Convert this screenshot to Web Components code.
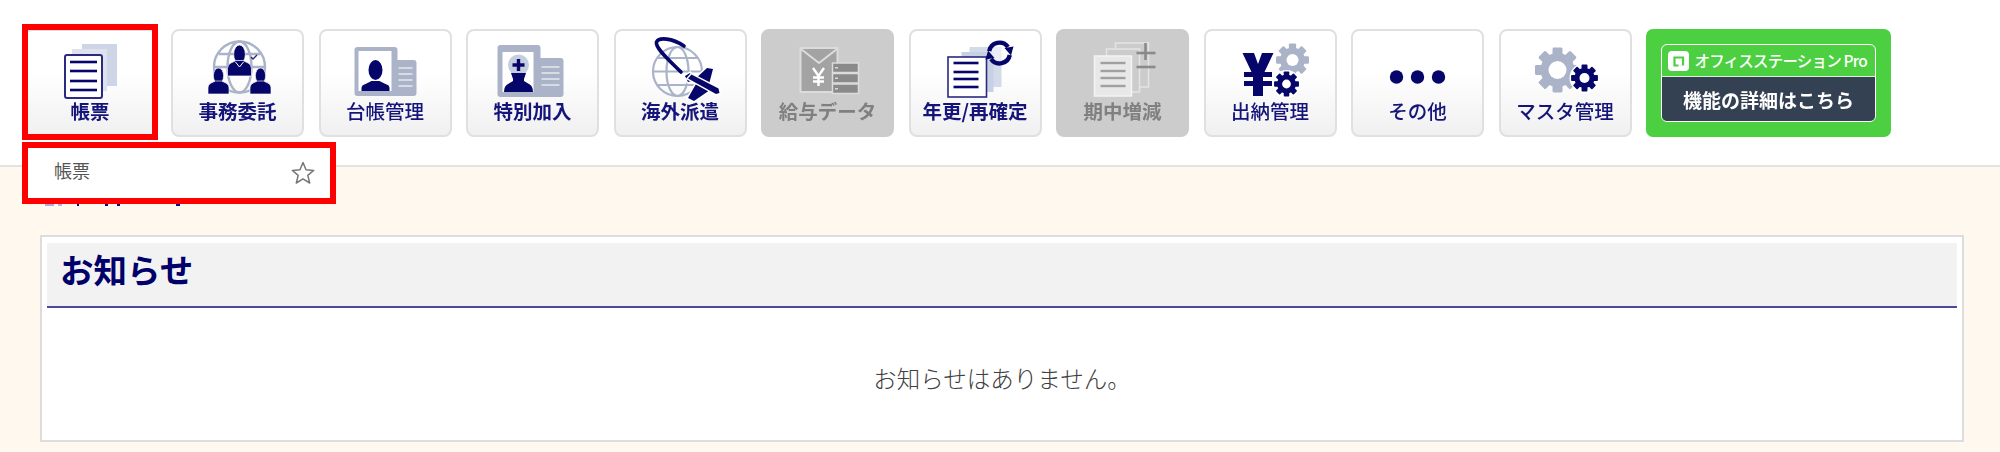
<!DOCTYPE html>
<html lang="ja">
<head>
<meta charset="utf-8">
<title>お知らせ</title>
<style>
  html, body { margin: 0; padding: 0; }
  body { background: #fff8ef; font-family: "Noto Sans CJK JP", sans-serif; height: 452px; overflow: hidden; }
</style>
</head>
<body>
<app-header>
  <menu-tile label="帳票" icon="forms" strong></menu-tile>
  <menu-tile label="事務委託" icon="entrust" strong></menu-tile>
  <menu-tile label="台帳管理" icon="ledger"></menu-tile>
  <menu-tile label="特別加入" icon="special" strong></menu-tile>
  <menu-tile label="海外派遣" icon="overseas" strong></menu-tile>
  <menu-tile label="給与データ" icon="salary" disabled></menu-tile>
  <menu-tile label="年更/再確定" icon="renew" strong></menu-tile>
  <menu-tile label="期中増減" icon="delta" disabled></menu-tile>
  <menu-tile label="出納管理" icon="cash"></menu-tile>
  <menu-tile label="その他" icon="more"></menu-tile>
  <menu-tile label="マスタ管理" icon="master"></menu-tile>
  <pro-banner></pro-banner>
</app-header>
<notice-panel title-text="お知らせ">お知らせはありません。</notice-panel>

<script>
const NAVY = '#06066a';
const STEEL = '#aab3c8';

const gear = (cx, cy, r, hole, fill, holeFill) => {
  let teeth = '';
  for (let i = 0; i < 8; i++) {
    teeth += `<rect x="${cx - r * 0.27}" y="${cy - r * 1.22}" width="${r * 0.54}" height="${r * 0.6}" rx="${r * 0.08}" fill="${fill}" transform="rotate(${i * 45} ${cx} ${cy})"/>`;
  }
  return `${teeth}<circle cx="${cx}" cy="${cy}" r="${r * 0.92}" fill="${fill}"/><circle cx="${cx}" cy="${cy}" r="${hole}" fill="${holeFill}"/>`;
};

const lines = (x1, x2, ys, color, w) =>
  ys.map(y => `<line x1="${x1}" x2="${x2}" y1="${y}" y2="${y}" stroke="${color}" stroke-width="${w}"/>`).join('');

// base figure is 28 wide and 25 high, scaled to fit
const person = (cx, top, sx, sy) => `
  <g transform="translate(${cx} ${top}) scale(${sx} ${sy})" fill="${NAVY}">
    <ellipse cx="0" cy="7.5" rx="6.8" ry="7.5"/>
    <path d="M-14 25v-6q0-3 4-4.5l6-2h8l6 2q4 1.5 4 4.5v6z"/>
  </g>`;

// big card with a smaller card to its right, used by 台帳管理 and 特別加入
const idCard = (x, y, w, h, sx, sw, sy, ys) => `
  <rect x="${x}" y="${y}" width="${w}" height="${h}" rx="3" fill="${STEEL}"/>
  <rect x="${sx - 3}" y="${sy}" width="${sw + 3}" height="${y + h - sy}" rx="3" fill="${STEEL}"/>
  ${lines(sx + 2, sx + sw - 4, ys, '#e6e9f1', 1.5)}`;

// icons use a box of 80x68 that sits at the top of the tile content
const ICONS = {
  forms: `
    <rect x="32" y="13" width="35" height="42" fill="#cdd5e6"/>
    <rect x="22" y="18" width="35" height="42" fill="#dde2ee"/>
    <rect x="15" y="24" width="37" height="43" rx="2" fill="#fff" stroke="#2a2a80" stroke-width="2"/>
    ${lines(20, 47, [31, 40, 50, 59], NAVY, 2.6)}`,
  entrust: `
    <g fill="none" stroke="${STEEL}" stroke-width="2.4">
      <circle cx="41.5" cy="36" r="25.5"/><ellipse cx="41.5" cy="36" rx="12" ry="25.5"/>
      <line x1="16" y1="36" x2="67" y2="36"/><line x1="21" y1="23" x2="62" y2="23"/>
    </g>
    <g stroke="#fff" stroke-width=".7">${person(41.5, 14, 0.86, 1.24)}${person(20.5, 37, 0.75, 1.04)}${person(62.5, 37, 0.75, 1.04)}</g>
    <path d="M37.5 31l4 5 4-5" fill="none" stroke="#fff" stroke-width="1"/>
    <path d="M53 26l2 2 4-4" fill="none" stroke="#2a2a80" stroke-width="1.4"/>`,
  ledger: `
    ${idCard(9.5, 16, 43, 49, 51.5, 20, 29, [37, 43, 49, 55])}
    <rect x="13.5" y="20" width="33" height="40" fill="#fff"/>
    <ellipse cx="30.5" cy="39" rx="7" ry="10" fill="${NAVY}"/>
    <path d="M16.5 60v-3q0-3 4-4l6-3h8l6 3q4 1 4 4v3z" fill="${NAVY}"/>`,
  special: `
    ${idCard(4.5, 14, 43, 52, 46.5, 24, 27, [36, 42, 48, 54])}
    <rect x="9.5" y="21" width="31" height="40" fill="#fff"/>
    <circle cx="25.5" cy="34" r="10.5" fill="#c5cde0"/>
    <path d="M23.8 28h3.4v4.3h4.3v3.4h-4.3v4.3h-3.4v-4.3h-4.3v-3.4h4.3z" fill="${NAVY}"/>
    <path d="M18 42h15l-2 6v2l5 3q4 2 4 8h-29q0-6 4-8l5-3v-2z" fill="${NAVY}"/>`,
  overseas: `
    <g fill="none" stroke="${STEEL}" stroke-width="2.2">
      <circle cx="37.5" cy="40.5" r="24.5"/><ellipse cx="37.5" cy="40.5" rx="11" ry="24.5"/>
      <line x1="13" y1="40.5" x2="62" y2="40.5"/><line x1="18" y1="27" x2="57" y2="27"/><line x1="18" y1="54" x2="57" y2="54"/>
    </g>
    <path d="M41 41C29 29 15 17 16.5 11C19 6 32 7 44 15" fill="none" stroke="${NAVY}" stroke-width="3.6" stroke-linecap="round"/>
    <g fill="${NAVY}" stroke="#fff" stroke-width="3" paint-order="stroke" transform="translate(1 1)">
      <path d="M44 44l5-3 5 7-7 2zM53 48l13-12 6 1-5 19zM55 52l-8 14 6 3 16-11z"/>
      <path d="M47 46.500l28 15.500 3.500-1-1-4.500-27-14z"/>
    </g>`,
  salary: `
    <rect x="12.5" y="17" width="37" height="44" fill="#a3a3a3" stroke="#dcdcdc" stroke-width="2"/>
    <path d="M13 18l18 14 18-14" fill="none" stroke="#dcdcdc" stroke-width="2"/>
    <path d="M25 37l5.500 8 5.500-8M30.500 45v10M25 46.500h11M25 50.500h11" fill="none" stroke="#fff" stroke-width="2.4"/>
    <g fill="#8a8a8a" stroke="#dcdcdc" stroke-width="1.500">
      <rect x="44.500" y="32" width="26" height="9.500"/><rect x="44.500" y="42.500" width="26" height="9.500"/><rect x="44.500" y="53" width="26" height="9.500"/>
    </g>
    <g fill="#d8d8d8"><rect x="47" y="36" width="3" height="1.500"/><rect x="47" y="46.500" width="3" height="1.500"/><rect x="47" y="57" width="3" height="1.500"/></g>`,
  renew: `
    <rect x="34.500" y="16" width="32" height="40" fill="#d3daea"/>
    <rect x="26.500" y="21" width="32" height="40" fill="#c8d0e4"/>
    <rect x="13" y="26" width="38.500" height="40" fill="#fff" stroke="#2a2a80" stroke-width="1.6"/>
    ${lines(18.500, 43.500, [32, 41, 48, 56], NAVY, 2.6)}
    <circle cx="64.500" cy="22" r="12.500" fill="#fff" opacity=".55"/>
    <g fill="none" stroke="${NAVY}" stroke-width="4.400">
      <path d="M54.200 20.200A10.500 10.500 0 0 1 73 16"/><path d="M74.800 24A10.500 10.500 0 0 1 56 28"/>
    </g>
    <path d="M69.500 17l9-1.500-2.500 9zM59.500 27l-9 1.500 2.500-9z" fill="${NAVY}"/>`,
  delta: `
    <rect x="32.500" y="12" width="33" height="44" fill="#ccc" stroke="#e4e4e4" stroke-width="1.500"/>
    <rect x="23.500" y="18" width="33" height="43" fill="#ccc" stroke="#e4e4e4" stroke-width="1.500"/>
    <rect x="11.500" y="25" width="37" height="40" fill="#e8e8e8" stroke="#f4f4f4" stroke-width="1.500"/>
    ${lines(17.500, 42.500, [32, 40, 47, 55], '#a0a0a0', 2.400)}
    <g stroke="#8a8a8a" stroke-width="2.600"><line x1="53.500" y1="22" x2="72.500" y2="22"/><line x1="62.500" y1="12" x2="62.500" y2="29"/><line x1="53.500" y1="36" x2="72.500" y2="36"/></g>`,
  cash: `
    ${gear(62.500, 29, 13.500, 6, STEEL, '#fff')}
    <path d="M12.500 22H24L28 33L32 22H43.500L34.500 41H42V46H33V50H42V55H33V65H23V55H14V50H23V46H14V41H21.500Z" fill="${NAVY}"/>
    <circle cx="56.500" cy="53" r="14" fill="#fff"/>
    ${gear(56.500, 53, 10.200, 4.400, NAVY, '#fff')}`,
  more: `
    <circle cx="18.500" cy="46" r="6.700" fill="${NAVY}"/><circle cx="39.500" cy="46" r="6.700" fill="${NAVY}"/><circle cx="60.500" cy="46" r="6.700" fill="${NAVY}"/>`,
  master: `
    ${gear(32.500, 39, 18.500, 9, STEEL, '#fff')}
    <circle cx="59.500" cy="47" r="15" fill="#fff"/>
    ${gear(59.500, 47, 11, 5, NAVY, '#fff')}`
};

class AppHeader extends HTMLElement {
  connectedCallback() {
    this.attachShadow({ mode: 'open' });
    this.shadowRoot.innerHTML = `
      <style>
        :host { display: block; position: relative; height: 165px; background: #fff; border-bottom: 2px solid #e2e2e2; }
        .bar { display: flex; gap: 14.5px; padding: 29px 0 0 23.5px; }
        .mark { position: absolute; left: 22px; top: 24px; width: 136px; height: 116px; box-sizing: border-box; border: 6px solid #f00; pointer-events: none; }
        .drop { position: absolute; left: 22px; top: 142px; width: 314px; height: 62px; background: #fff; box-sizing: border-box;
          border: 6px solid #f00; display: flex; align-items: center; justify-content: space-between; padding: 0 15px 0 26px;
          font: 18px/1 "Noto Sans CJK JP", sans-serif; color: #555; z-index: 2; }
        .drop span { margin-bottom: 7px; }
        .drop svg { display: block; }
        /* bottoms of a text that the menu hides */
        .peek { position: absolute; left: 44px; top: 204px; display: block; }
      </style>
      <div class="bar"><slot></slot></div>
      <div class="mark"></div>
      <svg class="peek" width="140" height="2">
        <rect x="1" width="9" height="2" fill="#aaaaea"/><rect x="14" width="4" height="2" fill="#b4b4ec"/>
        <rect x="33" width="2" height="2" fill="#0a0a80"/><rect x="61" width="3" height="2" fill="#0a0a80"/>
        <rect x="73" width="3" height="2" fill="#0a0a80"/><rect x="132" width="4" height="2" fill="#0a0a80"/>
      </svg>
      <div class="drop"><span>帳票</span>
        <svg width="24" height="24" viewBox="0 0 24 24"><path d="M12 1.500l3 7.300 7.700.6-5.900 5 1.900 7.600-6.700-4.100-6.700 4.100 1.900-7.600-5.900-5 7.700-.6z" fill="none" stroke="#777" stroke-width="1.500" stroke-linejoin="round"/></svg>
      </div>`;
  }
}

class MenuTile extends HTMLElement {
  connectedCallback() {
    this.attachShadow({ mode: 'open' });
    const off = this.hasAttribute('disabled');
    this.shadowRoot.innerHTML = `
      <style>
        :host { display: block; flex: 0 0 133px; height: 108px; box-sizing: border-box; border-radius: 8px;
          border: 2px solid ${off ? '#cccccc' : '#e0e0e0'};
          background: ${off ? '#cccccc' : 'linear-gradient(#ffffff 40%, #f0f0f0)'};
          color: ${off ? '#808080' : '#14147a'}; }
        .in { height: 100%; display: flex; flex-direction: column; align-items: center; filter: blur(.5px); }
        svg { display: block; overflow: visible; flex: none; }
        span { font: ${this.hasAttribute('strong') || off ? 700 : 500} 19.5px/24px "Noto Sans CJK JP", sans-serif; white-space: nowrap; }
      </style>
      <div class="in">
        <svg width="80" height="68" viewBox="0 0 80 68">${ICONS[this.getAttribute('icon')]}</svg>
        <span>${this.getAttribute('label')}</span>
      </div>`;
  }
}

class ProBanner extends HTMLElement {
  connectedCallback() {
    this.attachShadow({ mode: 'open' });
    this.shadowRoot.innerHTML = `
      <style>
        :host { display: block; flex: 0 0 245px; height: 108px; box-sizing: border-box; padding: 15px; background: #4ccf41; border-radius: 7px; }
        .box { height: 78px; box-sizing: border-box; border: 1.5px solid #fff; border-radius: 6px; overflow: hidden; display: flex; flex-direction: column; }
        .top { height: 32px; flex: none; display: flex; align-items: center; gap: 6px; padding-left: 5.5px; color: #fff; font: 500 15.5px/1 "Noto Sans CJK JP", sans-serif; letter-spacing: -.8px; white-space: nowrap; border-bottom: 1.5px solid #d8f5d5; box-sizing: border-box; }
        .bottom { flex: 1; background: #344152; color: #fff; display: flex; align-items: center; justify-content: center; font: 700 19px/1 "Noto Sans CJK JP", sans-serif; filter: blur(.4px); }
      </style>
      <div class="box">
        <div class="top">
          <svg width="21" height="20" viewBox="0 0 21 20"><rect width="21" height="20" rx="4" fill="#fff"/><path d="M10.500 14.500H6.500V6.500h8.500v8" fill="none" stroke="#4ccf41" stroke-width="2.200"/></svg>
          <span>オフィスステーション Pro</span>
        </div>
        <div class="bottom"><span>機能の詳細はこちら</span></div>
      </div>`;
  }
}

class NoticePanel extends HTMLElement {
  connectedCallback() {
    this.attachShadow({ mode: 'open' });
    this.shadowRoot.innerHTML = `
      <style>
        :host { display: block; margin: 68px 36px 0 40px; height: 207px; box-sizing: border-box; background: #fff; border: 2px solid #ddd; padding: 6px 5px; }
        h2 { margin: 0; height: 65px; box-sizing: border-box; background: #f2f2f2; border-bottom: 2px solid #4a4a9a; color: #00006a; padding-left: 13px;
          font: 700 33.5px/52px "Noto Sans CJK JP", sans-serif; }
        p { margin: 0; padding-top: 55px; text-align: center; font: 300 23.5px/30px "Noto Sans CJK JP", sans-serif; color: #404040; }
      </style>
      <h2>${this.getAttribute('title-text')}</h2>
      <p><slot></slot></p>`;
  }
}

customElements.define('app-header', AppHeader);
customElements.define('menu-tile', MenuTile);
customElements.define('pro-banner', ProBanner);
customElements.define('notice-panel', NoticePanel);
</script>
</body>
</html>
